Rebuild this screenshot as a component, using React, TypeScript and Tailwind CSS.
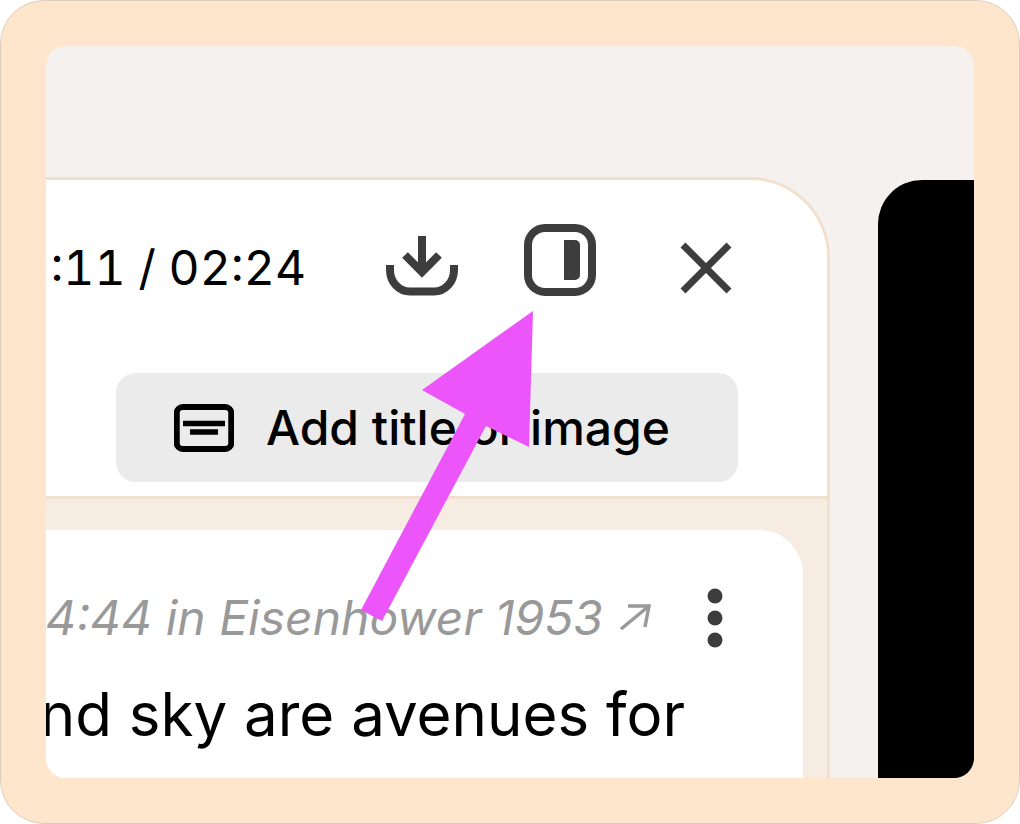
function DownloadIcon() {
  return (
    <svg className="size-18" viewBox="0 0 72 72" fill="none" stroke="#3d3d3d" strokeWidth="8" aria-hidden="true">
      <path d="M36 12v36M19 31l17 17 17-17" />
      <path d="M4 41v5c0 12 9 21.500 20 21.500h24c11 0 20-9.500 20-21.500v-5" />
    </svg>
  )
}

function SidePanelIcon() {
  return (
    <svg className="size-18" viewBox="0 0 72 72" fill="none" aria-hidden="true">
      <rect x="4" y="4" width="64" height="64" rx="17" stroke="#3d3d3d" strokeWidth="8" />
      <path d="M40 16h11a5 5 0 0 1 5 5v30a5 5 0 0 1-5 5H40z" fill="#3d3d3d" />
    </svg>
  )
}

function CloseIcon() {
  return (
    <svg className="size-18" viewBox="0 0 72 72" stroke="#3d3d3d" strokeWidth="7" aria-hidden="true">
      <path d="M13 21l46 46M59 21L13 67" />
    </svg>
  )
}

function TitleCardIcon() {
  return (
    <svg className="h-12 w-15 shrink-0" viewBox="0 0 60 48" fill="none" stroke="#000" aria-hidden="true">
      <rect x="2.750" y="3" width="54.500" height="42" rx="6" strokeWidth="6" />
      <path d="M9 19.500h42M16 28h28" strokeWidth="5.500" />
    </svg>
  )
}

// points from the lower left up at the side panel button
function PointerArrow() {
  return (
    <svg
      className="pointer-events-none absolute top-[131px] right-[294px] h-[310px] w-[172px]"
      viewBox="0 0 172 310"
      fill="#ec55f9"
      aria-hidden="true"
    >
      <path d="M172 0l-4 136-43-21L21 310 0 299 104 103 61 79z" />
    </svg>
  )
}

export default function App() {
  return (
    <main className="rounded-[44px] border border-[#dfcdbb] bg-[#fee6cd] p-[45px] font-['Inter',sans-serif] text-black">
      <div className="flex gap-12 overflow-hidden rounded-[20px] bg-[#f5f1ee]">
        <section className="relative mt-[131px] min-w-0 flex-1 rounded-tr-[80px] border-t-3 border-r-3 border-[#f3e0cc] bg-[#f6ece2]">
          <header className="rounded-tr-[77px] border-b-3 border-[#f1dfcf] bg-white pt-11 pb-3.5">
            <div className="flex items-start justify-end pr-[85px]">
              <span className="mt-2 mr-20 text-[48px] leading-[72px] whitespace-nowrap tabular-nums">:11 / 02:24</span>
              <div className="flex gap-[66px]">
                <button type="button" aria-label="Download">
                  <DownloadIcon />
                </button>
                <button type="button" aria-label="Toggle side panel">
                  <SidePanelIcon />
                </button>
                <button type="button" aria-label="Close" className="ml-2">
                  <CloseIcon />
                </button>
              </div>
            </div>
            <div className="mt-[69px] flex justify-end pr-[89px]">
              <button
                type="button"
                className="flex h-[109px] w-[622px] items-center gap-8 rounded-[20px] bg-[#ebebeb] pl-[58px] text-[48px] font-medium whitespace-nowrap"
              >
                <TitleCardIcon />
                Add title or image
              </button>
            </div>
          </header>

          <article className="mt-[31px] mr-6 overflow-hidden rounded-tr-[44px] bg-white pt-[52px] pb-6">
            <div className="flex items-center justify-end pr-20">
              <a href="#source" className="flex items-center gap-4 text-[48px] leading-[72px] whitespace-nowrap text-[#999] italic">
                4:44 in Eisenhower 1953
                <svg className="size-8" viewBox="0 0 32 32" fill="none" stroke="#999" strokeWidth="3.500" aria-hidden="true">
                  <path d="M2 27L30 4M9 4h21l-4 21" />
                </svg>
              </a>
              <button type="button" aria-label="More options" className="ml-14">
                <svg className="h-15 w-4" viewBox="0 0 16 60" fill="#3d3d3d" aria-hidden="true">
                  <circle cx="8" cy="8" r="7.500" />
                  <circle cx="8" cy="30" r="7.500" />
                  <circle cx="8" cy="52" r="7.500" />
                </svg>
              </button>
            </div>
            <p className="mt-5 flex justify-end pr-[118px] text-[60px] leading-[80px] whitespace-nowrap">
              nd sky are avenues for
            </p>
          </article>
          <PointerArrow />
        </section>
        <aside className="mt-[134px] w-24 shrink-0 rounded-tl-[44px] bg-black" />
      </div>
    </main>
  )
}
